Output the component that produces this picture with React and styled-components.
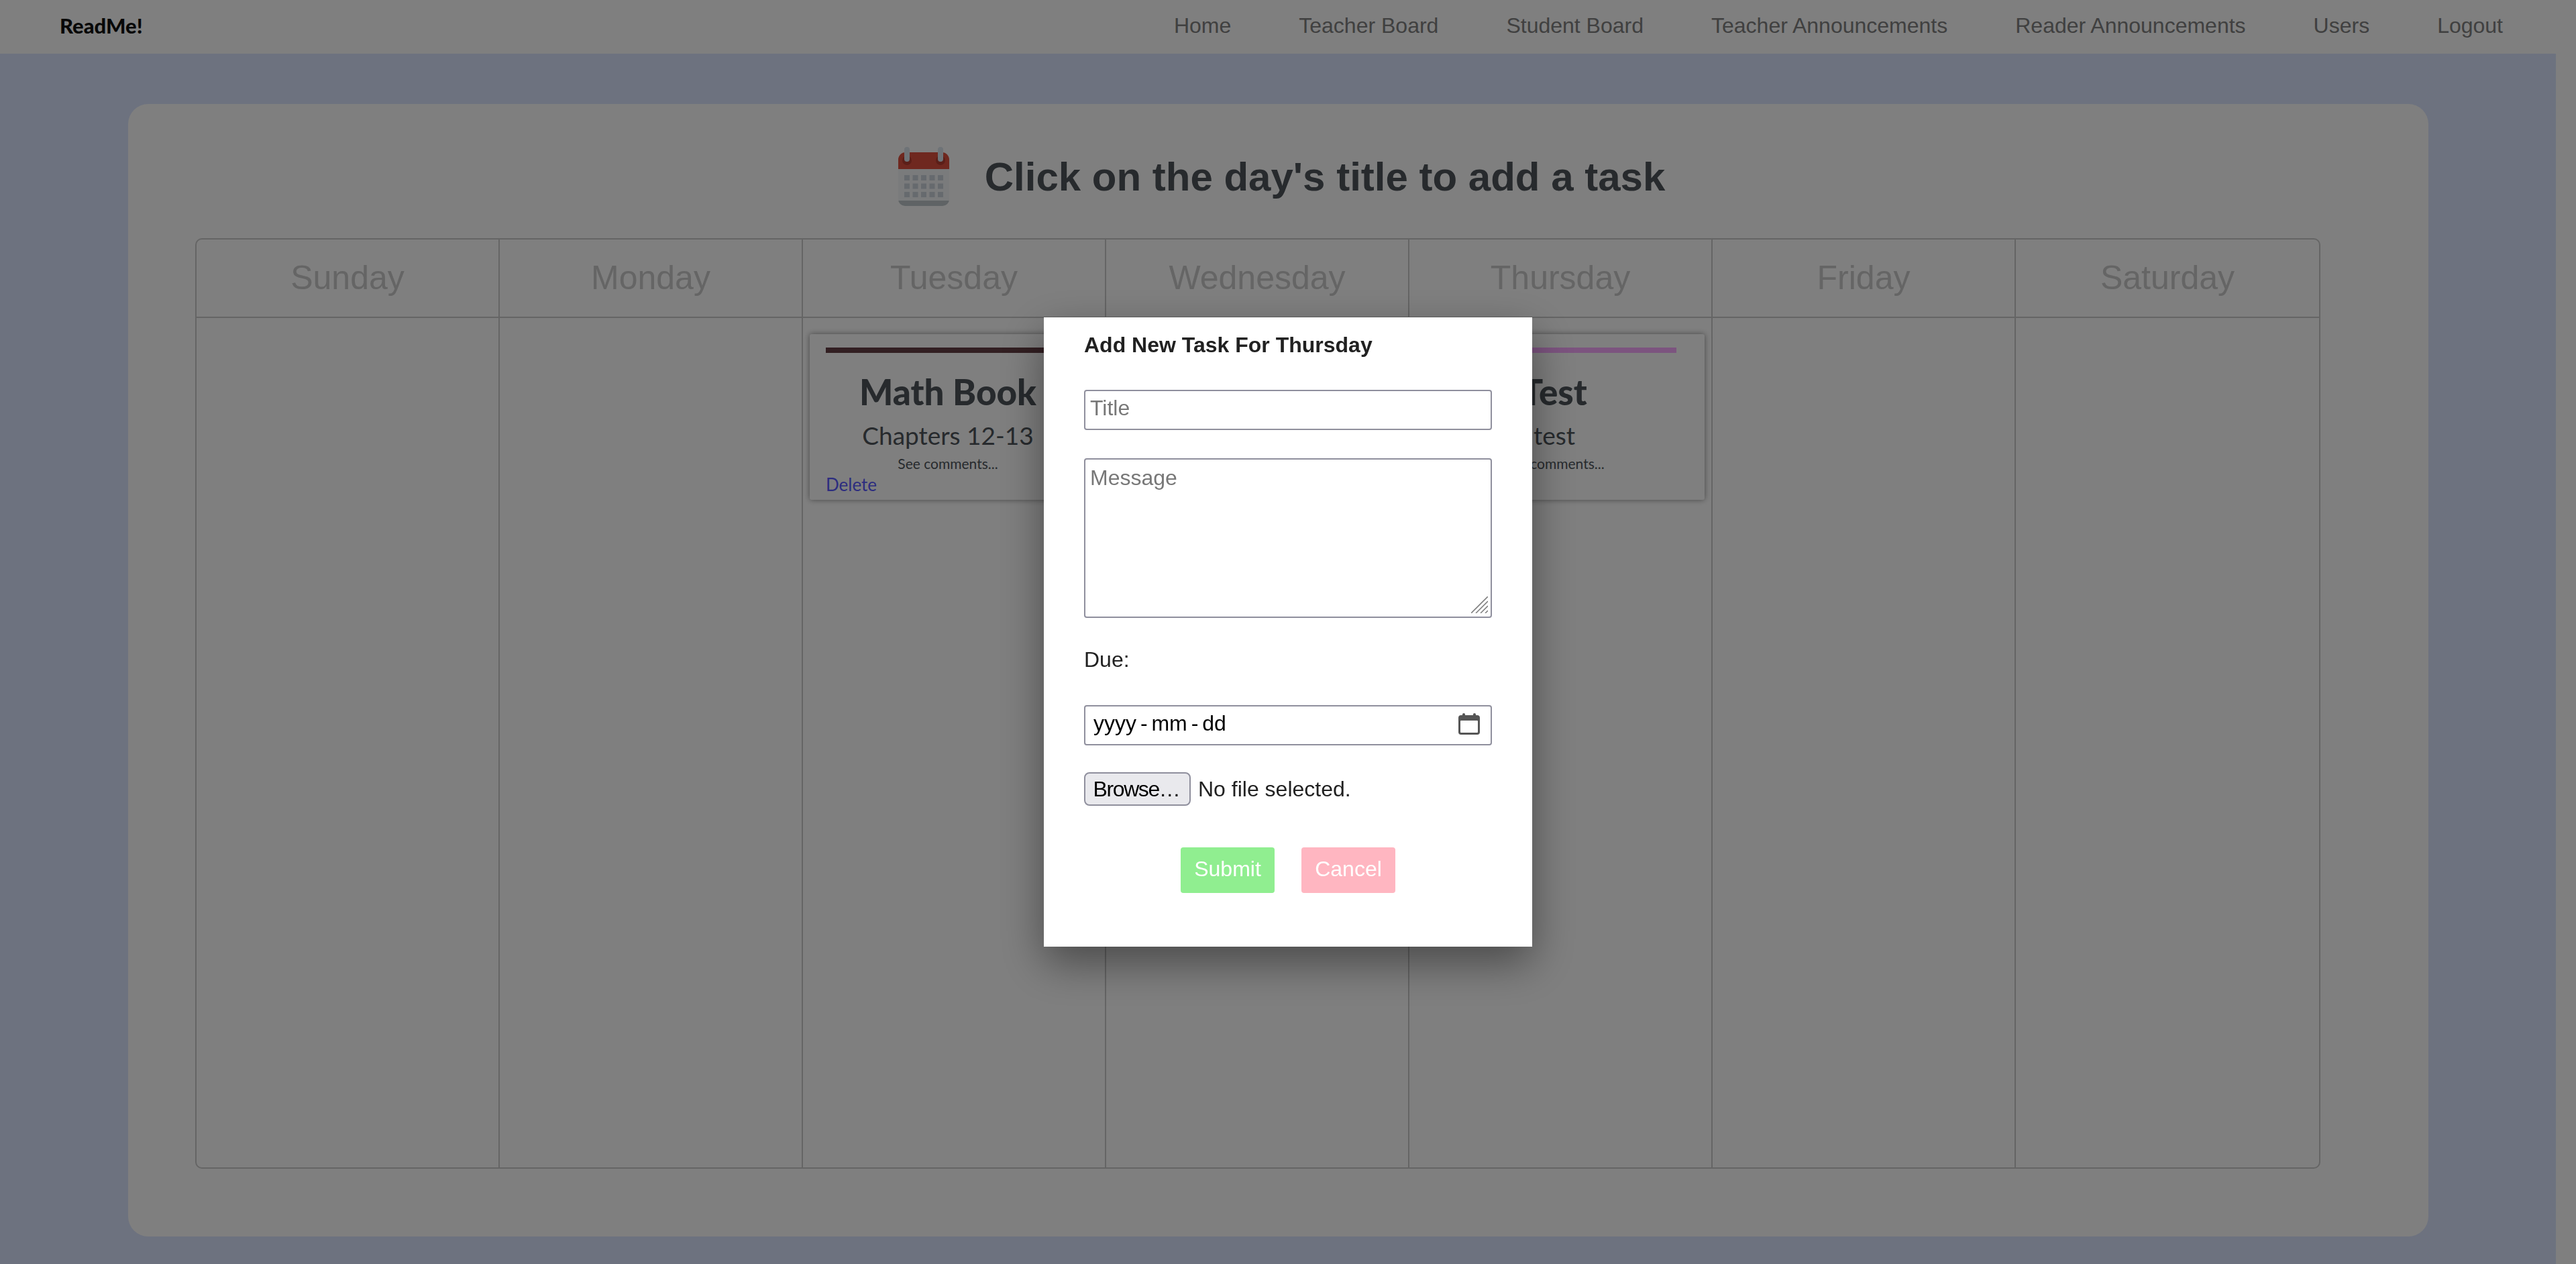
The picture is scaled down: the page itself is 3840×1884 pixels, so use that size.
import React from "react";
import styled, { createGlobalStyle } from "styled-components";

const DAYS = ["Sunday", "Monday", "Tuesday", "Wednesday", "Thursday", "Friday", "Saturday"];

const TASKS = {
  Tuesday: { title: "Math Book", text: "Chapters 12-13", color: "#643e44", canDelete: true },
  Thursday: { title: "Test", text: "test", color: "#f8a8ff" },
};

const NAV_LINKS = [
  "Home",
  "Teacher Board",
  "Student Board",
  "Teacher Announcements",
  "Reader Announcements",
  "Users",
  "Logout",
];

const GlobalStyle = createGlobalStyle`
  html, body {
    margin: 0;
    height: 100%;
    overflow: hidden;
    background: #fff;
    font-family: "Liberation Sans", Arial, sans-serif;
  }
  * {
    box-sizing: border-box;
  }
`;

const Page = styled.div`
  width: 3810px;
  height: 1884px;
  background: #dae4ff;
  overflow: hidden;
`;

const Navbar = styled.nav`
  display: flex;
  justify-content: space-between;
  align-items: center;
  height: 80px;
  padding: 0 79px 4px 89px;
  background: #fff;
`;

const Brand = styled.a`
  font-family: "Comic Sans MS", "Lato", sans-serif;
  font-size: 31px;
  font-weight: 900;
  color: #111;
`;

const NavLinks = styled.div`
  display: flex;
  gap: 101px;
`;

const NavLink = styled.a`
  font-size: 32px;
  color: #808080;
`;

const Content = styled.main`
  padding: 75px 190px 0 191px;
`;

const Panel = styled.section`
  height: 1688px;
  padding: 64px 161px 0 100px;
  background: #fff;
  border-radius: 30px;
`;

const Heading = styled.h1`
  display: flex;
  justify-content: center;
  align-items: center;
  gap: 52px;
  height: 88px;
  margin: 0 0 48px;
  padding-left: 70px;
  font-size: 60px;
  font-weight: 700;
  color: #4e555b;
`;

const Board = styled.div`
  display: grid;
  grid-template-columns: repeat(7, 1fr);
  grid-template-rows: 117px 1fr;
  height: 1387px;
  border: 2px solid #cacaca;
  border-radius: 10px;
`;

const DayTitle = styled.div`
  display: flex;
  justify-content: center;
  align-items: center;
  padding-bottom: 2px;
  font-size: 50px;
  color: #cacaca;
  border-bottom: 2px solid #cacaca;
  border-right: ${(p) => (p.$last ? "none" : "2px solid #cacaca")};
`;

const DayCell = styled.div`
  padding: 24px 10px;
  border-right: ${(p) => (p.$last ? "none" : "2px solid #cacaca")};
`;

const TaskCard = styled.article`
  display: flex;
  flex-direction: column;
  height: 247px;
  padding: 20px 42px 0 24px;
  background: #fff;
  border-radius: 3px;
  box-shadow: 0 0 8px rgba(0, 0, 0, 0.45);
  font-family: "Comic Sans MS", "Lato", sans-serif;
  color: #4e555b;
  text-align: center;
`;

const TaskBar = styled.div`
  height: 8px;
  flex: none;
  background: ${(p) => p.$color};
`;

const TaskTitle = styled.div`
  margin-top: 28px;
  font-size: 53px;
  line-height: 60px;
  font-weight: 900;
`;

const TaskText = styled.div`
  margin-top: 13px;
  font-size: 37px;
  line-height: 44px;
`;

const TaskMore = styled.div`
  margin-top: 6px;
  font-size: 21px;
  line-height: 28px;
`;

const DeleteLink = styled.a`
  align-self: flex-start;
  font-size: 26px;
  line-height: 34px;
  color: #5a5aff;
`;

const Overlay = styled.div`
  position: fixed;
  inset: 0;
  display: flex;
  justify-content: center;
  align-items: center;
  background: rgba(0, 0, 0, 0.5);
`;

const Modal = styled.form`
  display: flex;
  flex-direction: column;
  width: 728px;
  height: 938px;
  padding: 23px 60px 0;
  background: #fff;
  box-shadow: 0 24px 60px rgba(0, 0, 0, 0.42);
  font-size: 32px;
  color: #212121;
`;

const ModalTitle = styled.h2`
  margin: 0 0 48px;
  font-size: 32px;
  line-height: 37px;
  font-weight: 700;
`;

const TitleInput = styled.input`
  display: block;
  width: 100%;
  height: 60px;
  margin: 0 0 42px;
  padding: 0 7px 6px;
  border: 2px solid #8f8f9d;
  border-radius: 4px;
  outline: none;
  font: inherit;
  &::placeholder {
    color: #777;
    opacity: 1;
  }
`;

const MessageWrap = styled.div`
  position: relative;
  height: 238px;
  margin: 0 0 44px;
`;

const MessageInput = styled.textarea`
  display: block;
  width: 100%;
  height: 100%;
  padding: 9px 7px;
  border: 2px solid #8f8f9d;
  border-radius: 4px;
  outline: none;
  resize: none;
  font: inherit;
  &::placeholder {
    color: #777;
    opacity: 1;
  }
`;

const ResizeGrip = styled.svg`
  position: absolute;
  right: 6px;
  bottom: 7px;
  width: 25px;
  height: 25px;
`;

const DueLabel = styled.label`
  display: block;
  margin: 0 0 49px;
  line-height: 37px;
`;

const DateField = styled.div`
  display: flex;
  justify-content: space-between;
  align-items: center;
  height: 60px;
  margin: 0 0 40px;
  padding: 0 16px 0 12px;
  border: 2px solid #8f8f9d;
  border-radius: 4px;
  color: #000;
  word-spacing: -3px;
`;

const DateText = styled.span`
  padding-bottom: 5px;
`;

const DateGlyph = styled.svg`
  width: 32px;
  height: 32px;
  margin-bottom: 4px;
`;

const FileRow = styled.div`
  display: flex;
  align-items: center;
  gap: 11px;
  height: 50px;
  margin: 0 0 62px;
`;

const BrowseButton = styled.button`
  width: 159px;
  height: 50px;
  padding: 0 3px 0 0;
  background: #e9e9ed;
  border: 2px solid #8f8f9d;
  border-radius: 8px;
  font: inherit;
  letter-spacing: -1.4px;
  color: #000;
`;

const Actions = styled.div`
  display: flex;
  justify-content: center;
  gap: 40px;
`;

const ActionButton = styled.button`
  width: 140px;
  height: 68px;
  padding: 0 0 4px;
  background: ${(p) => p.$bg};
  border: none;
  border-radius: 4px;
  font: inherit;
  color: #fff;
`;

function CalendarEmoji() {
  return (
    <svg width="78" height="88" viewBox="0 0 78 88" style={{ flex: "none" }}>
      <path d="M1 71h76v7a10 10 0 0 1-10 10H11A10 10 0 0 1 1 78z" fill="#bec6ca" />
      <rect x="1" y="30" width="76" height="50" fill="#f5f7f8" />
      <path d="M1 33V19A11 11 0 0 1 12 8h54a11 11 0 0 1 11 11v14z" fill="#de503e" />
      <circle cx="14" cy="20" r="7" fill="#b83e30" />
      <circle cx="64" cy="20" r="7" fill="#b83e30" />
      <rect x="10" y="0" width="8" height="22" rx="4" fill="#dce6ee" />
      <rect x="60" y="0" width="8" height="22" rx="4" fill="#dce6ee" />
      {[42, 54.5, 67].map((y) =>
        [10, 22.5, 35, 47.5, 60].map((x) => (
          <rect key={`${x}-${y}`} x={x} y={y} width="8" height="8" fill="#ccd4dc" />
        ))
      )}
    </svg>
  );
}

function DateIcon() {
  return (
    <DateGlyph viewBox="0 0 32 32">
      <rect x="6" y="0" width="4" height="8" rx="2" fill="#555" />
      <rect x="22" y="0" width="4" height="8" rx="2" fill="#555" />
      <rect x="0" y="3" width="32" height="29" rx="4" fill="#555" />
      <rect x="3" y="11" width="26" height="18" rx="1" fill="#fff" />
    </DateGlyph>
  );
}

function Task({ task }) {
  return (
    <TaskCard>
      <TaskBar $color={task.color} />
      <TaskTitle>{task.title}</TaskTitle>
      <TaskText>{task.text}</TaskText>
      <TaskMore>See comments...</TaskMore>
      {task.canDelete && <DeleteLink>Delete</DeleteLink>}
    </TaskCard>
  );
}

export default function App() {
  return (
    <>
      <GlobalStyle />
      <Page>
        <Navbar>
          <Brand>ReadMe!</Brand>
          <NavLinks>
            {NAV_LINKS.map((link) => (
              <NavLink key={link}>{link}</NavLink>
            ))}
          </NavLinks>
        </Navbar>
        <Content>
          <Panel>
            <Heading>
              <CalendarEmoji />
              Click on the day's title to add a task
            </Heading>
            <Board>
              {DAYS.map((day, i) => (
                <DayTitle key={day} $last={i === 6}>
                  {day}
                </DayTitle>
              ))}
              {DAYS.map((day, i) => (
                <DayCell key={day} $last={i === 6}>
                  {TASKS[day] && <Task task={TASKS[day]} />}
                </DayCell>
              ))}
            </Board>
          </Panel>
        </Content>
      </Page>
      <Overlay>
        <Modal>
          <ModalTitle>Add New Task For Thursday</ModalTitle>
          <TitleInput placeholder="Title" />
          <MessageWrap>
            <MessageInput placeholder="Message" />
            <ResizeGrip viewBox="0 0 25 25">
              <g stroke="#808080" strokeWidth="1.6">
                <line x1="0" y1="25" x2="25" y2="0" />
                <line x1="7" y1="25" x2="25" y2="7" />
                <line x1="14" y1="25" x2="25" y2="14" />
                <line x1="21" y1="25" x2="25" y2="21" />
              </g>
            </ResizeGrip>
          </MessageWrap>
          <DueLabel>Due:</DueLabel>
          <DateField>
            <DateText>yyyy - mm - dd</DateText>
            <DateIcon />
          </DateField>
          <FileRow>
            <BrowseButton type="button">Browse…</BrowseButton>
            <span>No file selected.</span>
          </FileRow>
          <Actions>
            <ActionButton type="button" $bg="#90ee90">Submit</ActionButton>
            <ActionButton type="button" $bg="#ffb6c1">Cancel</ActionButton>
          </Actions>
        </Modal>
      </Overlay>
    </>
  );
}
